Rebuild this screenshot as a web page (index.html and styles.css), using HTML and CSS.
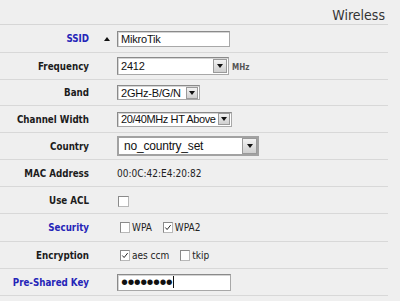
FILE: index.html
```html
<!DOCTYPE html>
<html>
<head>
<meta charset="utf-8">
<link rel="stylesheet" href="styles.css">
</head>
<body>
<div class="page">
  <div class="head"><div class="title">Wireless</div></div>

  <div class="row h27">
    <div class="label blue">SSID</div>
    <div class="mid"><span class="up"></span></div>
    <div class="val"><div class="field ssid">MikroTik</div></div>
  </div>

  <div class="row">
    <div class="label">Frequency</div>
    <div class="mid"></div>
    <div class="val">
      <div class="field combo freq"><span class="ftext">2412</span><span class="btn"><span class="down"></span></span></div>
      <span class="unit">MHz</span>
    </div>
  </div>

  <div class="row h25">
    <div class="label">Band</div>
    <div class="mid"></div>
    <div class="val"><div class="field combo band"><span class="ftext">2GHz-B/G/N</span><span class="btn"><span class="down"></span></span></div></div>
  </div>

  <div class="row">
    <div class="label">Channel Width</div>
    <div class="mid"></div>
    <div class="val"><div class="field combo chw"><span class="ftext">20/40MHz HT Above</span><span class="btn"><span class="down"></span></span></div></div>
  </div>

  <div class="row">
    <div class="label">Country</div>
    <div class="mid"></div>
    <div class="val"><div class="field combo country"><span class="ftext">no_country_set</span><span class="btn"><span class="down"></span></span></div></div>
  </div>

  <div class="row">
    <div class="label">MAC Address</div>
    <div class="mid"></div>
    <div class="val"><span class="plain">00:0C:42:E4:20:82</span></div>
  </div>

  <div class="row">
    <div class="label">Use ACL</div>
    <div class="mid"></div>
    <div class="val"><span class="cb acl"></span></div>
  </div>

  <div class="row h27">
    <div class="label blue">Security</div>
    <div class="mid"></div>
    <div class="val">
      <span class="opt"><span class="cb"></span><span class="otext">WPA</span></span>
      <span class="opt"><span class="cb checked"><svg viewBox="0 0 9 9" width="9" height="9"><path d="M1.5 4.5 L3.5 6.8 L7.5 1.8" fill="none" stroke="#222" stroke-width="1.1"/></svg></span><span class="otext">WPA2</span></span>
    </div>
  </div>

  <div class="row">
    <div class="label">Encryption</div>
    <div class="mid"></div>
    <div class="val">
      <span class="opt"><span class="cb checked"><svg viewBox="0 0 9 9" width="9" height="9"><path d="M1.5 4.5 L3.5 6.8 L7.5 1.8" fill="none" stroke="#222" stroke-width="1.1"/></svg></span><span class="otext">aes ccm</span></span>
      <span class="opt"><span class="cb"></span><span class="otext">tkip</span></span>
    </div>
  </div>

  <div class="row">
    <div class="label blue">Pre-Shared Key</div>
    <div class="mid"></div>
    <div class="val"><div class="field psk"><span class="dots">&#8226;&#8226;&#8226;&#8226;&#8226;&#8226;&#8226;&#8226;</span><span class="caret"></span></div></div>
  </div>
</div>
</body>
</html>
```

FILE: styles.css
```css
html, body {
  margin: 0;
  padding: 0;
  background: #efefef;
}
body {
  font-family: "DejaVu Sans Condensed", "DejaVu Sans", sans-serif;
  color: #1c1c1c;
}
.page {
  width: 388px;
}
.head {
  height: 24px;
  border-bottom: 1px solid #d6d6d6;
  display: flex;
  justify-content: flex-end;
  align-items: center;
}
.title {
  font-size: 14px;
  color: #333;
  padding-right: 3px;
  padding-top: 5px;
}
.row {
  height: 26px;
  border-bottom: 1px solid #d8d8d8;
  display: flex;
  align-items: center;
}
.row.h27 { height: 27px; }
.row.h25 { height: 25px; }
.label {
  width: 89px;
  text-align: right;
  font-weight: bold;
  font-size: 9.7px;
  color: #1c1c1c;
}
.label.blue { color: #2525b8; }
.mid {
  width: 28px;
  display: flex;
  align-items: center;
  justify-content: flex-start;
}
.up {
  margin-left: 15px;
  width: 0;
  height: 0;
  border-left: 3px solid transparent;
  border-right: 3px solid transparent;
  border-bottom: 4px solid #111;
}
.val {
  display: flex;
  align-items: center;
}
.field {
  box-sizing: border-box;
  background: #fff;
  border: 1px solid #8a8a8a;
  border-right-color: #a8a8a8;
  border-bottom-color: #a8a8a8;
  box-shadow: inset 1px 1px 0 #d4d4d4;
  font-family: "Liberation Sans", Arial, sans-serif;
  font-size: 11px;
  color: #111;
  display: flex;
  align-items: center;
  padding-left: 3px;
  letter-spacing: -0.2px;
  white-space: nowrap;
}
.ssid { width: 113px; height: 16px; }
.psk { width: 114px; height: 17px; padding-left: 3px; }
.combo { justify-content: space-between; padding-right: 1px; }
.freq { width: 112px; height: 18px; }
.band { width: 83px; height: 15px; }
.chw { width: 115px; height: 15px; letter-spacing: -0.4px; }
.country { width: 142px; height: 20px; border: 2px solid #a2a2a2; box-shadow: none; padding-right: 0; padding-left: 5px; font-size: 12px; }
.btn {
  box-sizing: border-box;
  width: 13px;
  height: 13px;
  background: linear-gradient(#f2f2f2, #cfcfcf);
  border: 1px solid #9a9a9a;
  display: flex;
  align-items: center;
  justify-content: center;
  flex: none;
}
.freq .btn { width: 14px; height: 14px; }
.country .btn { width: 15px; height: 16px; }
.band .btn, .chw .btn { width: 12px; height: 12px; }
.down {
  width: 0;
  height: 0;
  border-left: 3px solid transparent;
  border-right: 3px solid transparent;
  border-top: 4px solid #111;
}
.unit {
  font-size: 8px;
  font-weight: bold;
  color: #555;
  margin-left: 3px;
  padding-top: 2px;
}
.plain {
  font-size: 10px;
  color: #222;
}
.cb {
  box-sizing: border-box;
  width: 10px;
  height: 11px;
  background: #fff;
  border: 1px solid #8a8a8a;
  border-right-color: #b8b8b8;
  border-bottom-color: #b8b8b8;
  display: inline-flex;
  align-items: center;
  justify-content: center;
}
.cb.acl { width: 11px; height: 11px; margin-left: 1px; margin-top: 2px; }
.opt {
  display: inline-flex;
  align-items: center;
  margin-left: 3px;
  margin-right: 8px;
}
.otext {
  font-size: 10px;
  color: #222;
  margin-left: 2px;
}
.dots {
  font-family: "Liberation Sans", Arial, sans-serif;
  font-size: 20px;
  line-height: 12px;
  letter-spacing: -0.6px;
  color: #111;
  height: 12px;
  display: inline-flex;
  align-items: center;
}
.caret {
  width: 1px;
  height: 12px;
  background: #111;
  margin-left: 1px;
}
```
